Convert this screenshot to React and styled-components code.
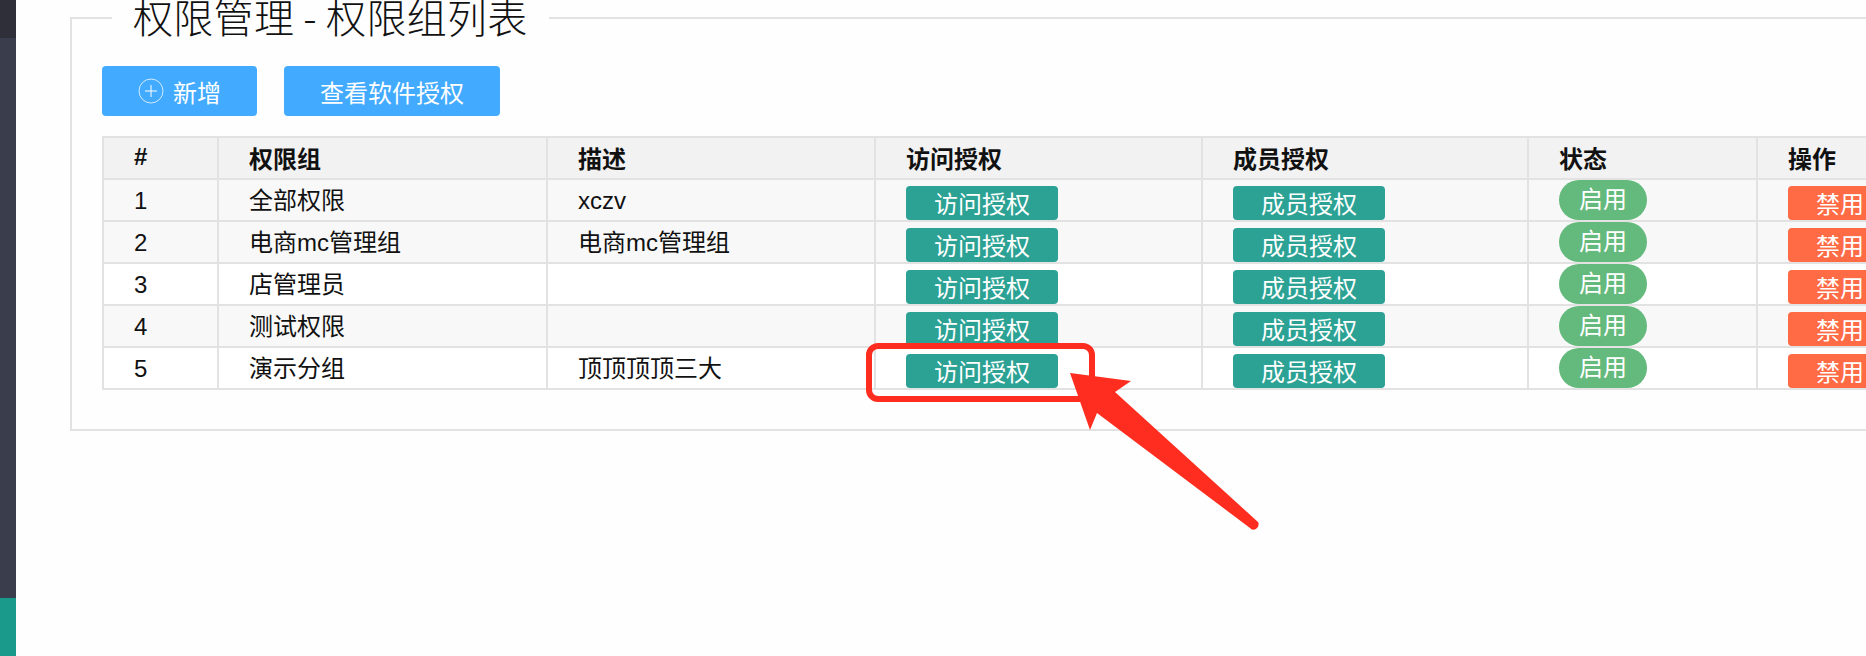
import React from "react";
import styled, { createGlobalStyle } from "styled-components";

const groups = [
  { id: 1, name: "全部权限", desc: "xczv" },
  { id: 2, name: "电商mc管理组", desc: "电商mc管理组" },
  { id: 3, name: "店管理员", desc: "" },
  { id: 4, name: "测试权限", desc: "" },
  { id: 5, name: "演示分组", desc: "顶顶顶顶三大" },
];

const columnWidths = [115, 329, 328, 327, 326, 229, 240];
const headers = ["#", "权限组", "描述", "访问授权", "成员授权", "状态", "操作"];

const GlobalStyle = createGlobalStyle`
  html, body {
    margin: 0;
    height: 100%;
    overflow: hidden;
    background: #fefefe;
    font-family: "Liberation Sans", "Noto Sans CJK SC", sans-serif;
    color: #111;
  }
`;

const Page = styled.div`
  display: flex;
  width: 1866px;
  height: 656px;
  overflow: hidden;
  position: relative;
`;

const Sidebar = styled.aside`
  flex: 0 0 16px;
  display: flex;
  flex-direction: column;
  background: #3a3d4b;
`;

const SidebarTop = styled.div`
  height: 38px;
  background: #2e2f38;
`;

const SidebarActive = styled.div`
  height: 58px;
  margin-top: auto;
  background: #1a9a8a;
`;

const Main = styled.main`
  flex: 1;
  min-width: 0;
  padding-left: 54px;
`;

const Panel = styled.fieldset`
  width: 1900px;
  height: 435px;
  box-sizing: border-box;
  margin: -4px 0 0;
  padding: 0 0 0 30px;
  border: 2px solid #e2e2e2;
`;

const PanelTitle = styled.legend`
  margin-left: 10px;
  padding: 0 21px 4px;
  font-size: 40px;
  line-height: 40px;
  font-weight: 300;
  letter-spacing: 0.3px;
  font-family: "Noto Sans CJK SC", sans-serif;
`;

const Toolbar = styled.div`
  display: flex;
  gap: 27px;
  margin-top: 26px;
  margin-bottom: 20px;
`;

const ToolButton = styled.button`
  display: flex;
  align-items: center;
  justify-content: center;
  gap: 9px;
  width: ${(p) => p.$width}px;
  height: 50px;
  padding: 0;
  border: 0;
  border-radius: 4px;
  background: #42abff;
  color: #fff;
  font-size: 24px;
  font-family: "Noto Sans CJK SC", sans-serif;
`;

const Table = styled.table`
  table-layout: fixed;
  width: 1894px;
  border-collapse: collapse;
  border: 2px solid #e2e2e2;
  font-size: 24px;
`;

const HeadCell = styled.th`
  height: 38px;
  padding: 0 0 2px 30px;
  border: 2px solid #e2e2e2;
  background: #f2f2f2;
  text-align: left;
  font-weight: 700;
`;

const Row = styled.tr`
  background: ${(p) => (p.$shaded ? "#f8f8f8" : "#fff")};
`;

const Cell = styled.td`
  height: 38px;
  padding: 2px 0 0 30px;
  border: 2px solid #e2e2e2;
  vertical-align: ${(p) => (p.$action ? "bottom" : "middle")};
  line-height: 38px;
`;

const ActionButton = styled.button`
  display: block;
  height: 34px;
  width: ${(p) => p.$width}px;
  padding: 0;
  border: 0;
  border-radius: 4px;
  background: ${(p) => p.$color};
  color: #fff;
  font-size: 24px;
  line-height: 34px;
  font-family: "Noto Sans CJK SC", sans-serif;
`;

const StatusPill = styled.span`
  display: block;
  width: 88px;
  height: 40px;
  margin-top: -2px;
  border-radius: 20px;
  background: #64b97c;
  color: #fff;
  font-size: 24px;
  line-height: 40px;
  text-align: center;
`;

const Annotation = styled.svg`
  position: absolute;
  left: 0;
  top: 0;
  pointer-events: none;
`;

const PlusIcon = () => (
  <svg width="26" height="26" viewBox="0 0 26 26" fill="none" stroke="#fff" strokeWidth="1">
    <circle cx="13" cy="13" r="12" strokeOpacity="0.75" />
    <path d="M13 7v12M7 13h12" />
  </svg>
);

export default function App() {
  return (
    <Page>
      <GlobalStyle />
      <Sidebar>
        <SidebarTop />
        <SidebarActive />
      </Sidebar>
      <Main>
        <Panel>
          <PanelTitle>权限管理 - 权限组列表</PanelTitle>
          <Toolbar>
            <ToolButton $width={155}>
              <PlusIcon />
              新增
            </ToolButton>
            <ToolButton $width={216}>查看软件授权</ToolButton>
          </Toolbar>
          <Table>
            <colgroup>
              {columnWidths.map((w, i) => (
                <col key={i} width={w} />
              ))}
            </colgroup>
            <thead>
              <tr>
                {headers.map((h) => (
                  <HeadCell key={h}>{h}</HeadCell>
                ))}
              </tr>
            </thead>
            <tbody>
              {groups.map((g) => (
                <Row key={g.id} $shaded={g.id === 1 || g.id === 2 || g.id === 4}>
                  <Cell>{g.id}</Cell>
                  <Cell>{g.name}</Cell>
                  <Cell>{g.desc}</Cell>
                  <Cell $action>
                    <ActionButton $width={152} $color="#2ca295">访问授权</ActionButton>
                  </Cell>
                  <Cell $action>
                    <ActionButton $width={152} $color="#2ca295">成员授权</ActionButton>
                  </Cell>
                  <Cell $action>
                    <StatusPill>启用</StatusPill>
                  </Cell>
                  <Cell $action>
                    <ActionButton $width={104} $color="#ff6b45">禁用</ActionButton>
                  </Cell>
                </Row>
              ))}
            </tbody>
          </Table>
        </Panel>
      </Main>
      <Annotation width="1866" height="656" viewBox="0 0 1866 656">
        <rect x="869" y="346" width="223" height="53" rx="9" fill="none" stroke="#ff2d1f" strokeWidth="6" />
        <path
          d="M1070 373L1131 381L1115 392L1258 522Q1260 526 1256 529Q1252 531 1250 528L1097 413L1090 430Z"
          fill="#ff2d1f"
        />
      </Annotation>
    </Page>
  );
}
